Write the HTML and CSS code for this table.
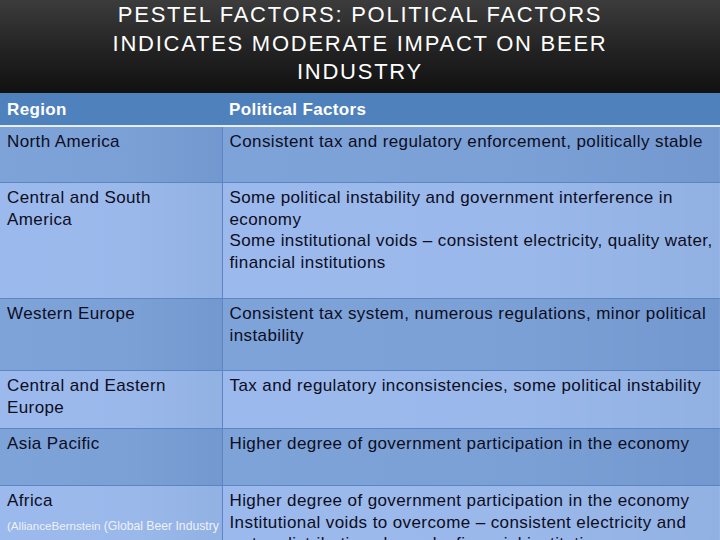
FILE: index.html
```html
<!DOCTYPE html>
<html>
<head>
<meta charset="utf-8">
<link rel="stylesheet" href="styles.css">
</head>
<body>
<div class="slide">
  <header class="title">
    <h1>PESTEL FACTORS: POLITICAL FACTORS<br>INDICATES MODERATE IMPACT ON BEER<br>INDUSTRY</h1>
  </header>
  <table class="grid">
    <colgroup><col class="c1"><col class="c2"></colgroup>
    <thead>
      <tr><th>Region</th><th>Political Factors</th></tr>
    </thead>
    <tbody>
      <tr class="dark r1"><td>North America</td><td>Consistent tax and regulatory enforcement, politically stable</td></tr>
      <tr class="light r2"><td>Central and South America</td><td>Some political instability and government interference in economy<br>Some institutional voids – consistent electricity, quality water, financial institutions</td></tr>
      <tr class="dark r3"><td>Western Europe</td><td>Consistent tax system, numerous regulations, minor political instability</td></tr>
      <tr class="light r4"><td>Central and Eastern Europe</td><td>Tax and regulatory inconsistencies, some political instability</td></tr>
      <tr class="dark r5"><td>Asia Pacific</td><td>Higher degree of government participation in the economy</td></tr>
      <tr class="light r6"><td>Africa<div class="src">(AllianceBernstein <span class="src2">(Global Beer Industry</span></div></td><td>Higher degree of government participation in the economy<br>Institutional voids to overcome – consistent electricity and water, distribution channels, financial institutions</td></tr>
    </tbody>
  </table>
</div>
</body>
</html>
```
FILE: styles.css
```css
html, body {
  margin: 0;
  padding: 0;
}
body {
  width: 720px;
  height: 540px;
  overflow: hidden;
  font-family: "Liberation Sans", Arial, sans-serif;
  background: #9ab8ea;
}
.slide {
  width: 720px;
  height: 540px;
  overflow: hidden;
}
.title {
  height: 93px;
  background: linear-gradient(to bottom, #3c3c3c 0%, #222 55%, #111 100%);
  display: flex;
  justify-content: center;
}
.title h1 {
  margin: 0;
  padding-top: 1px;
  font-weight: normal;
  color: #fff;
  font-size: 22px;
  line-height: 28.5px;
  text-align: center;
  letter-spacing: 1.75px;
}
.grid {
  width: 720px;
  border-collapse: collapse;
  table-layout: fixed;
}
.c1 { width: 222px; }
.grid th {
  background: #4f81bd;
  color: #fff;
  font-weight: bold;
  font-size: 17px;
  letter-spacing: 0.35px;
  text-align: left;
  height: 30px;
  padding: 2px 7px 0 7px;
  border-bottom: 2px solid #e8eef8;
}
.grid td {
  vertical-align: top;
  font-size: 17px;
  letter-spacing: 0.4px;
  line-height: 21.7px;
  color: #0d0d1e;
  padding: 4px 7px 0 7px;
  border-top: 1px solid #5b86c3;
  border-bottom: 1px solid #5b86c3;
}
.grid td + td {
  border-left: 1px solid #5b86c3;
  padding-right: 2px;
}
.dark td { background: linear-gradient(to right, #7ea3d9 0%, #7ba0d6 60%, #7298cf 100%); }
.light td { background: linear-gradient(to right, #9bb9ec 0%, #9ab8ea 60%, #92b1e3 100%); }
.r1 td { height: 51px; }
.r2 td { height: 111px; }
.r3 td { height: 67px; }
.r4 td { height: 53px; }
.r5 td { height: 52px; }
.r6 td { height: 80px; }
.src {
  margin-top: 6px;
  font-size: 11.6px;
  letter-spacing: 0;
  line-height: 15px;
  color: #eef2fa;
  white-space: nowrap;
}
.src2 { font-size: 12.2px; }
```
